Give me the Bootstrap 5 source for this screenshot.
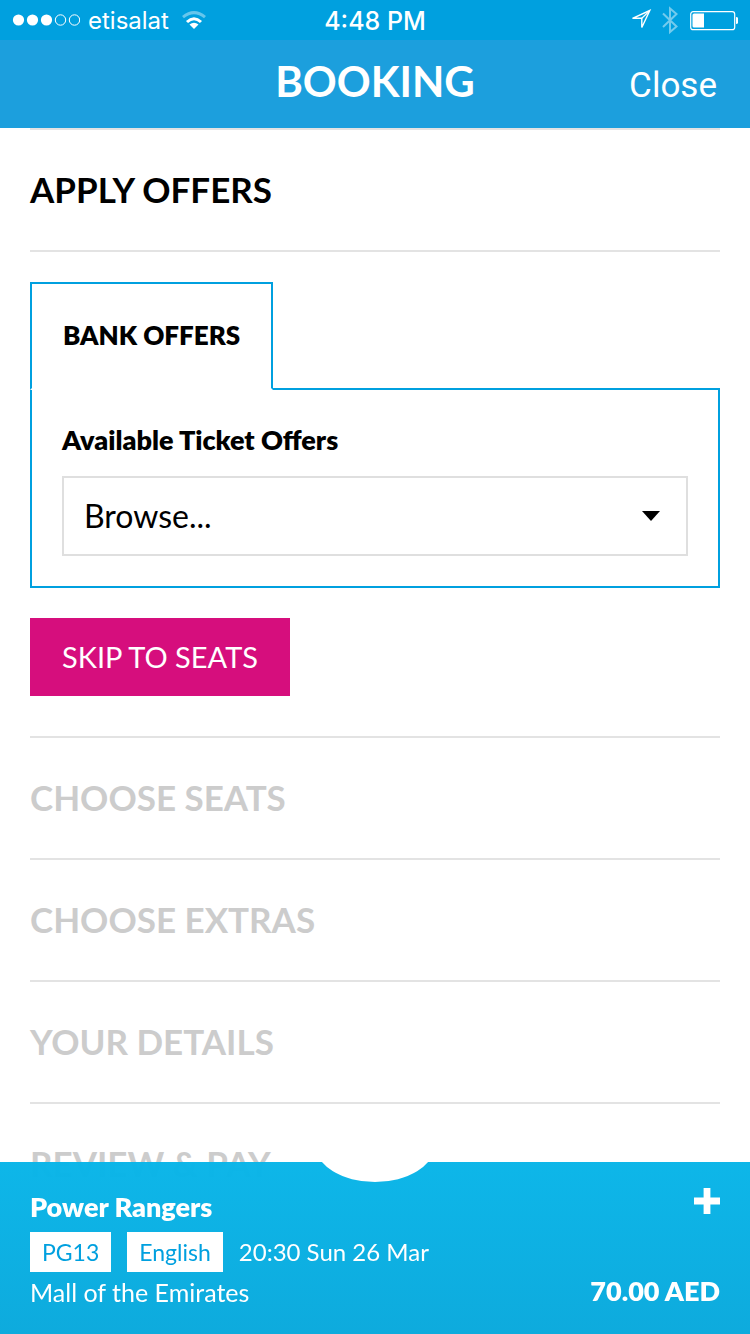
<!DOCTYPE html>
<html lang="en">
<head>
<meta charset="utf-8">
<meta name="viewport" content="width=device-width, initial-scale=1">
<title>Booking</title>
<link href="https://cdn.jsdelivr.net/npm/bootstrap@5.3.0/dist/css/bootstrap.min.css" rel="stylesheet">
<style>
  :root { --brand: #00a0df; --rule: #e3e3e3; --gutter: 30px; }
  body { font-family: Lato, "Open Sans", sans-serif; color: #000; background: #fff; font-size: 24px; }
  .gutter-x { padding-left: var(--gutter); padding-right: var(--gutter); }
  .status-bar { height: 40px; background: var(--brand); font: 24px/38px Inter, Roboto, sans-serif; padding: 0 12px; }
  .status-bar span { padding-top: 2px; }
  .status-bar .clock { font-size: 25px; }
  .title-bar { height: 88px; background: #1c9fdd; }
  .title-bar h1 { font-size: 42px; line-height: 48px; font-weight: 700; margin: 0; padding-bottom: 6px; }
  .title-bar a { font: 35px/40px Roboto, Inter, sans-serif; right: 33px; padding-top: 3px; }
  .step { border-top: 2px solid var(--rule); }
  .step h2 { font-size: 35px; line-height: 118px; font-weight: 700; margin: 0; padding-bottom: 2px; }
  .step-off h2 { color: #ccc; }
  .offers { border-top: 2px solid var(--rule); padding: 30px 0 40px; }
  .offer-tabs { border: 0; margin-bottom: -2px; }
  .offer-tabs .nav-link { font-size: 26px; line-height: 40px; padding: 31px 31px 33px; font-weight: 800; border: 2px solid var(--brand); border-radius: 0; margin: 0; }
  .offer-tabs .nav-link.active { color: #000; border-color: var(--brand) var(--brand) #fff; }
  .offer-panel { border: 2px solid var(--brand); padding: 30px; }
  .offer-panel label { font-size: 27px; line-height: 40px; font-weight: 800; margin-bottom: 16px; display: block; }
  .offer-panel .form-select { height: 80px; border: 2px solid #dfdfdf; border-radius: 0; font-size: 32px; line-height: 40px; color: #000; padding: 0 60px 0 20px;
    background-image: url("data:image/svg+xml,%3csvg xmlns='http://www.w3.org/2000/svg' viewBox='0 0 18 10'%3e%3cpath d='M0 0h18l-9 10z'/%3e%3c/svg%3e");
    background-size: 18px 10px; background-position: right 26px center; }
  .btn-skip { --bs-btn-color: #fff; --bs-btn-bg: #d60e7d; --bs-btn-hover-color: #fff; --bs-btn-hover-bg: #b90c6c; --bs-btn-border-width: 0; font-size: 29px; line-height: 38px; padding: 20px 32px; border-radius: 0; margin-top: 30px; }
  .summary { background: linear-gradient(rgba(6,180,232,.97), rgba(6,168,220,.97)); padding-top: 25px; padding-bottom: 22px; overflow: hidden; }
  .summary .film { font-size: 27px; line-height: 40px; font-weight: 800; margin: 0; }
  .summary .total { font-size: 27px; line-height: 38px; padding-bottom: 2px; font-weight: 800; }
  .summary .tag { background: #fff; color: var(--brand); font-size: 23px; padding: 0 12px; }
  .summary .facts { gap: 16px; margin-top: 5px; line-height: 40px; }
  .summary .place { font-size: 25px; line-height: 40px; margin: 0; }
  .notch { width: 120px; height: 75px; bottom: calc(100% - 20px); border-radius: 50%; background: #fff; }
</style>
</head>
<body>
<header class="sticky-top text-white">
  <div class="status-bar position-relative d-flex align-items-center justify-content-between">
    <div class="d-flex align-items-center">
      <svg class="me-2" width="68" height="12" viewBox="0 0 68 12" fill="#fff" aria-hidden="true">
        <circle cx="6.500" cy="6" r="5.600"/><circle cx="20.500" cy="6" r="5.600"/><circle cx="34.500" cy="6" r="5.600"/>
        <g fill="none" stroke="#fff"><circle cx="48.500" cy="6" r="5.200"/><circle cx="62.500" cy="6" r="5.200"/></g>
      </svg>
      <span>etisalat</span>
      <svg class="ms-2" width="34" height="24" viewBox="0 0 34 24" aria-hidden="true">
        <g fill="none" stroke="#fff" stroke-width="3"><path d="M6 9.200Q17 0 28 9.200" opacity=".4"/><path d="M10 14Q17 7.500 24 14"/></g>
        <path d="M17 21l-4.500-4.600q4.500-3.400 9 0z" fill="#fff"/>
      </svg>
    </div>
    <span class="clock position-absolute start-50 translate-middle-x fw-medium text-nowrap">4:48 PM</span>
    <div class="d-flex align-items-center">
      <svg width="108" height="30" viewBox="0 0 108 30" fill="none" stroke="#fff" aria-hidden="true">
        <path d="M19.800 5.500L2.500 13.300h9.300V22.500z" stroke-width="1.400"/><path d="M19.500 6l-7.700 7.300" stroke-width="1.200"/>
        <path d="M33 8.500l13.500 13-6.500 5.500V3.500l6.500 5.500L33 22" stroke-width="2" opacity=".45"/>
        <rect x="60.700" y="6.700" width="44" height="18" rx="2.500" stroke-width="1.200"/>
        <path d="M64 8.500h10v14H64q-1.500 0-1.500-1.500V10q0-1.500 1.500-1.500z" fill="#fff" stroke="none"/>
        <path d="M106 12q3 0 3 3.500T106 19z" fill="#fff" stroke="none"/>
      </svg>
    </div>
  </div>
  <div class="title-bar gutter-x position-relative d-flex align-items-center justify-content-center">
    <h1>BOOKING</h1>
    <a href="#" class="position-absolute text-decoration-none text-white">Close</a>
  </div>
</header>

<main class="gutter-x">
  <section class="step">
    <h2>APPLY OFFERS</h2>
    <div class="offers">
      <ul class="nav nav-tabs offer-tabs position-relative" role="tablist">
        <li class="nav-item" role="presentation"><button class="nav-link active" id="bank-tab" type="button" role="tab" aria-controls="bank" aria-selected="true">BANK OFFERS</button></li>
      </ul>
      <div class="offer-panel" id="bank" role="tabpanel" aria-labelledby="bank-tab">
        <label for="ticket-offer">Available Ticket Offers</label>
        <select class="form-select" id="ticket-offer"><option>Browse...</option></select>
      </div>
      <button class="btn btn-skip" type="button">SKIP TO SEATS</button>
    </div>
  </section>
  <section class="step step-off"><h2>CHOOSE SEATS</h2></section>
  <section class="step step-off"><h2>CHOOSE EXTRAS</h2></section>
  <section class="step step-off"><h2>YOUR DETAILS</h2></section>
  <section class="step step-off"><h2>REVIEW &amp; PAY</h2></section>
</main>

<footer class="summary fixed-bottom gutter-x text-white">
  <div class="notch position-absolute start-50 translate-middle-x"></div>
  <div class="d-flex justify-content-between">
    <div>
      <p class="film">Power Rangers</p>
      <div class="facts d-flex flex-wrap"><span class="tag">PG13</span><span class="tag">English</span><span>20:30 Sun 26 Mar</span></div>
      <p class="place">Mall of the Emirates</p>
    </div>
    <div class="d-flex flex-column justify-content-between align-items-end">
      <button type="button" class="btn p-0 border-0 d-flex" aria-label="Show booking details">
        <svg width="26" height="28" viewBox="0 0 26 28"><path d="M9.600 1h6.800v9.600H26v6.800h-9.600V27H9.600v-9.600H0v-6.800h9.600z" fill="#fff"/></svg>
      </button>
      <span class="total">70.00 AED</span>
    </div>
  </div>
</footer>
<script src="https://cdn.jsdelivr.net/npm/bootstrap@5.3.0/dist/js/bootstrap.bundle.min.js"></script>
</body>
</html>
